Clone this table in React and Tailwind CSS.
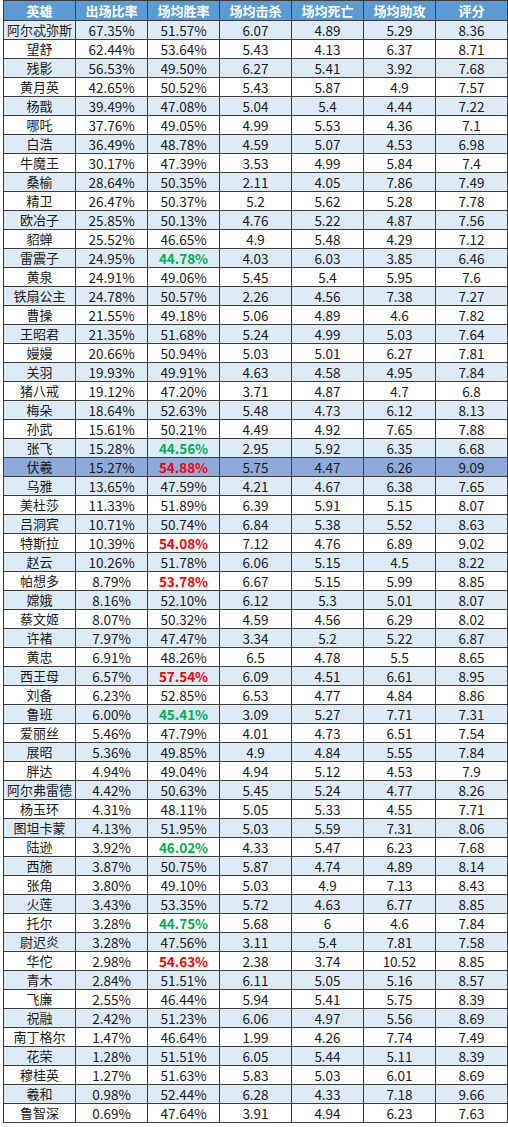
const heroes = [
  ['阿尔忒弥斯', '67.35%', '51.57%', '6.07', '4.89', '5.29', '8.36'],
  ['望舒', '62.44%', '53.64%', '5.43', '4.13', '6.37', '8.71'],
  ['残影', '56.53%', '49.50%', '6.27', '5.41', '3.92', '7.68'],
  ['黄月英', '42.65%', '50.52%', '5.43', '5.87', '4.9', '7.57'],
  ['杨戬', '39.49%', '47.08%', '5.04', '5.4', '4.44', '7.22'],
  ['哪吒', '37.76%', '49.05%', '4.99', '5.53', '4.36', '7.1'],
  ['白浩', '36.49%', '48.78%', '4.59', '5.07', '4.53', '6.98'],
  ['牛魔王', '30.17%', '47.39%', '3.53', '4.99', '5.84', '7.4'],
  ['桑榆', '28.64%', '50.35%', '2.11', '4.05', '7.86', '7.49'],
  ['精卫', '26.47%', '50.37%', '5.2', '5.62', '5.28', '7.78'],
  ['欧冶子', '25.85%', '50.13%', '4.76', '5.22', '4.87', '7.56'],
  ['貂蝉', '25.52%', '46.65%', '4.9', '5.48', '4.29', '7.12'],
  ['雷震子', '24.95%', '44.78%', '4.03', '6.03', '3.85', '6.46', 'low'],
  ['黄泉', '24.91%', '49.06%', '5.45', '5.4', '5.95', '7.6'],
  ['铁扇公主', '24.78%', '50.57%', '2.26', '4.56', '7.38', '7.27'],
  ['曹操', '21.55%', '49.18%', '5.06', '4.89', '4.6', '7.82'],
  ['王昭君', '21.35%', '51.68%', '5.24', '4.99', '5.03', '7.64'],
  ['嫚嫚', '20.66%', '50.94%', '5.03', '5.01', '6.27', '7.81'],
  ['关羽', '19.93%', '49.91%', '4.63', '4.58', '4.95', '7.84'],
  ['猪八戒', '19.12%', '47.20%', '3.71', '4.87', '4.7', '6.8'],
  ['梅朵', '18.64%', '52.63%', '5.48', '4.73', '6.12', '8.13'],
  ['孙武', '15.61%', '50.21%', '4.49', '4.92', '7.65', '7.88'],
  ['张飞', '15.28%', '44.56%', '2.95', '5.92', '6.35', '6.68', 'low'],
  ['伏羲', '15.27%', '54.88%', '5.75', '4.47', '6.26', '9.09', 'high', true],
  ['乌雅', '13.65%', '47.59%', '4.21', '4.67', '6.38', '7.65'],
  ['美杜莎', '11.33%', '51.89%', '6.39', '5.91', '5.15', '8.07'],
  ['吕洞宾', '10.71%', '50.74%', '6.84', '5.38', '5.52', '8.63'],
  ['特斯拉', '10.39%', '54.08%', '7.12', '4.76', '6.89', '9.02', 'high'],
  ['赵云', '10.26%', '51.78%', '6.06', '5.15', '4.5', '8.22'],
  ['帕想多', '8.79%', '53.78%', '6.67', '5.15', '5.99', '8.85', 'high'],
  ['嫦娥', '8.16%', '52.10%', '6.12', '5.3', '5.01', '8.07'],
  ['蔡文姬', '8.07%', '50.32%', '4.59', '4.56', '6.29', '8.02'],
  ['许褚', '7.97%', '47.47%', '3.34', '5.2', '5.22', '6.87'],
  ['黄忠', '6.91%', '48.26%', '6.5', '4.78', '5.5', '8.65'],
  ['西王母', '6.57%', '57.54%', '6.09', '4.51', '6.61', '8.95', 'high'],
  ['刘备', '6.23%', '52.85%', '6.53', '4.77', '4.84', '8.86'],
  ['鲁班', '6.00%', '45.41%', '3.09', '5.27', '7.71', '7.31', 'low'],
  ['爱丽丝', '5.46%', '47.79%', '4.01', '4.73', '6.51', '7.54'],
  ['展昭', '5.36%', '49.85%', '4.9', '4.84', '5.55', '7.84'],
  ['胖达', '4.94%', '49.04%', '4.94', '5.12', '4.53', '7.9'],
  ['阿尔弗雷德', '4.42%', '50.63%', '5.45', '5.24', '4.77', '8.26'],
  ['杨玉环', '4.31%', '48.11%', '5.05', '5.33', '4.55', '7.71'],
  ['图坦卡蒙', '4.13%', '51.95%', '5.03', '5.59', '7.31', '8.06'],
  ['陆逊', '3.92%', '46.02%', '4.33', '5.47', '6.23', '7.68', 'low'],
  ['西施', '3.87%', '50.75%', '5.87', '4.74', '4.89', '8.14'],
  ['张角', '3.80%', '49.10%', '5.03', '4.9', '7.13', '8.43'],
  ['火莲', '3.43%', '53.35%', '5.72', '4.63', '6.77', '8.85'],
  ['托尔', '3.28%', '44.75%', '5.68', '6', '4.6', '7.84', 'low'],
  ['尉迟炎', '3.28%', '47.56%', '3.11', '5.4', '7.81', '7.58'],
  ['华佗', '2.98%', '54.63%', '2.38', '3.74', '10.52', '8.85', 'high'],
  ['青木', '2.84%', '51.51%', '6.11', '5.05', '5.16', '8.57'],
  ['飞廉', '2.55%', '46.44%', '5.94', '5.41', '5.75', '8.39'],
  ['祝融', '2.42%', '51.23%', '6.06', '4.97', '5.56', '8.69'],
  ['南丁格尔', '1.47%', '46.64%', '1.99', '4.26', '7.74', '7.49'],
  ['花荣', '1.28%', '51.51%', '6.05', '5.44', '5.11', '8.39'],
  ['穆桂英', '1.27%', '51.63%', '5.83', '5.03', '6.01', '8.69'],
  ['羲和', '0.98%', '52.44%', '6.28', '4.33', '7.18', '9.66'],
  ['鲁智深', '0.69%', '47.64%', '3.91', '4.94', '6.23', '7.63'],
];

const headers = ['英雄', '出场比率', '场均胜率', '场均击杀', '场均死亡', '场均助攻', '评分'];

function rowBg(i, selected) {
  if (selected) return 'bg-[#8eaadb]';
  return i % 2 === 0 ? 'bg-[#ddebf7]' : 'bg-white';
}

export default function App() {
  return (
    <div className="min-h-[1127px] bg-white pl-[3px] font-['Microsoft_YaHei','Noto_Sans_CJK_SC',sans-serif] text-[13.5px] text-[#1a1a1a]">
      <table className="border-collapse table-fixed w-[504px]">
        <colgroup>
          <col className="w-[72px]" />
          <col className="w-[72px]" />
          <col className="w-[72px]" />
          <col className="w-[72px]" />
          <col className="w-[72px]" />
          <col className="w-[72px]" />
          <col className="w-[72px]" />
        </colgroup>
        <thead>
          <tr className="h-[20px] bg-[#5b9bd5] text-white">
            {headers.map((h) => (
              <th key={h} className="border border-[#3d3d3d] p-0 text-center text-[13px] font-bold leading-[19px]">
                {h}
              </th>
            ))}
          </tr>
        </thead>
        <tbody>
          {heroes.map((r, i) => {
            const [name, rate, win, kill, death, assist, score, mark, selected] = r;
            let winCls = '';
            if (mark === 'low') winCls = 'font-bold text-[#00b050]';
            if (mark === 'high') winCls = 'font-bold text-[#ff0000]';
            return (
              <tr key={name} className={`h-[19px] ${rowBg(i, selected)}`}>
                <td className="border border-[#3d3d3d] p-0 text-center text-[13px] leading-[18px] whitespace-nowrap">{name}</td>
                <td className="border border-[#3d3d3d] p-0 text-center leading-[18px]">{rate}</td>
                <td className={`border border-[#3d3d3d] p-0 text-center leading-[18px] ${winCls}`}>{win}</td>
                <td className="border border-[#3d3d3d] p-0 text-center leading-[18px]">{kill}</td>
                <td className="border border-[#3d3d3d] p-0 text-center leading-[18px]">{death}</td>
                <td className="border border-[#3d3d3d] p-0 text-center leading-[18px]">{assist}</td>
                <td className="border border-[#3d3d3d] p-0 text-center leading-[18px]">{score}</td>
              </tr>
            );
          })}
        </tbody>
      </table>
    </div>
  );
}
